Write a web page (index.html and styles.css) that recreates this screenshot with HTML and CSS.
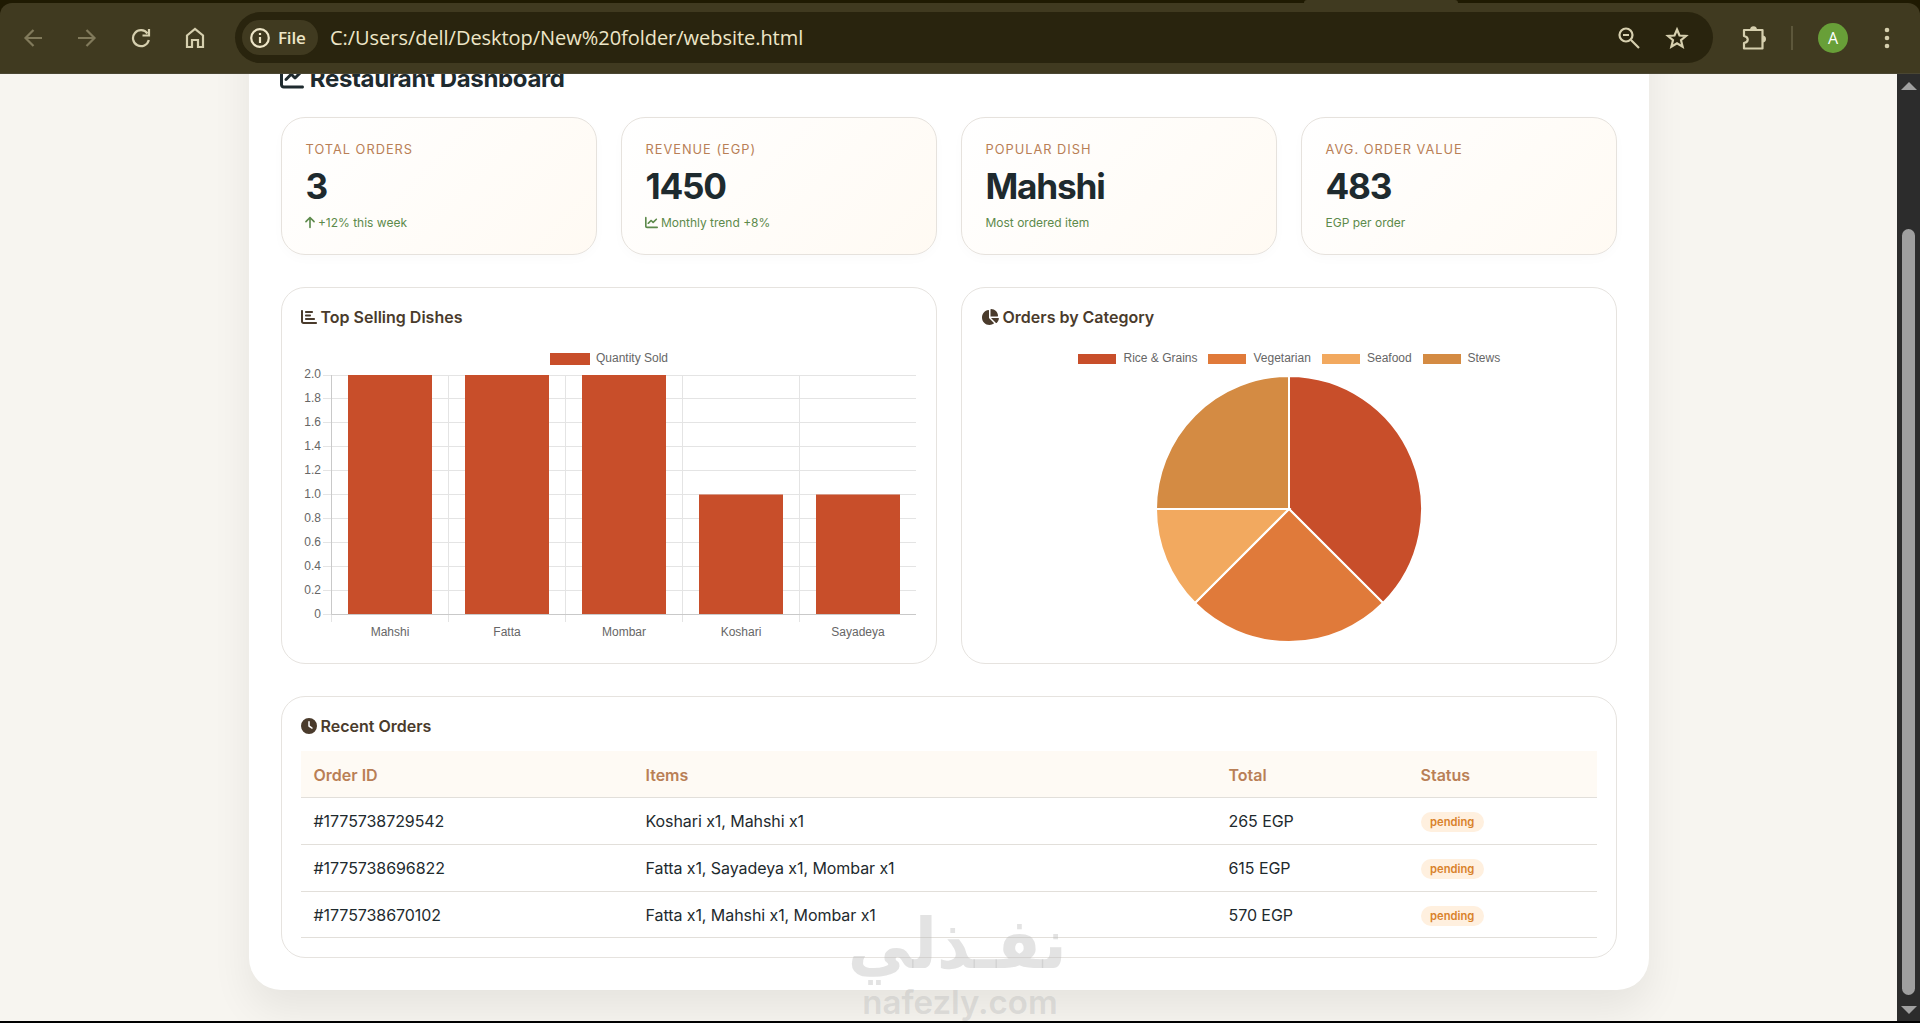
FILE: index.html
```html
<!DOCTYPE html>
<html lang="en">
<head>
  <meta charset="UTF-8">
  <title>Restaurant Dashboard</title>
  <link rel="stylesheet" href="styles.css">
</head>
<body>
  <div class="tab-strip"><div class="active-tab"></div></div>
  <header class="toolbar">
    <div class="nav-icons">
      <svg class="dim" width="20" height="20" viewBox="0 0 20 20"><path d="M19 10H3M10.500 2L2.500 10l8 8"/></svg>
      <svg class="dim" width="20" height="20" viewBox="0 0 20 20"><path d="M1 10h16M9.500 2l8 8-8 8"/></svg>
      <svg width="20" height="20" viewBox="0 0 20 20"><path d="M16.500 5.500A8 8 0 1 0 17.800 12M18 1v6.500h-6.500"/></svg>
      <svg width="20" height="22" viewBox="0 0 20 22"><path d="M2 8.500L10 2l8 6.500V20h-5v-7H7v7H2z"/></svg>
    </div>
    <div class="omnibox">
      <div class="chip">
        <svg width="20" height="20" viewBox="0 0 20 20"><circle cx="10" cy="10" r="8.800"/><path d="M10 9v6M10 5v2"/></svg>
        <span>File</span>
      </div>
      <span class="url">C:/Users/dell/Desktop/New%20folder/website.html</span>
      <svg class="zoom-icon" width="22" height="22" viewBox="0 0 22 22"><circle cx="8" cy="8" r="6.500"/><path d="M5 8h6M13 13l8 8"/></svg>
      <svg width="24" height="24" viewBox="0 0 24 24"><path d="M12 3.500l2.500 6 6.500.5-5 4.200 1.600 6.400L12 17.200l-5.600 3.400L8 14.200 3 10l6.500-.5z"/></svg>
    </div>
    <svg class="puzzle" width="26" height="26" viewBox="0 0 26 26"><path d="M3 5h18.500v18.500H3v-5.500c5-1 5-6 0-7z" stroke-linejoin="round"/><path class="solid" d="M9 5a3.500 3.800 0 0 1 7 0zM21.500 10.500a3.500 3.500 0 0 1 0 7z"/></svg>
    <div class="divider"></div>
    <div class="avatar">A</div>
    <svg class="dots" width="6" height="22" viewBox="0 0 6 22"><circle cx="3" cy="3" r="2.300"/><circle cx="3" cy="11" r="2.300"/><circle cx="3" cy="19" r="2.300"/></svg>
  </header>

  <div class="viewport">
    <div class="page">
      <main class="dashboard">
        <h2>
          <svg width="24" height="24" viewBox="0 0 512 512"><path d="M64 64c0-17.700-14.300-32-32-32S0 46.300 0 64V400c0 44.200 35.800 80 80 80H480c17.700 0 32-14.300 32-32s-14.300-32-32-32H80c-8.800 0-16-7.200-16-16V64zm406.600 86.600c12.500-12.500 12.500-32.800 0-45.300s-32.800-12.500-45.300 0L320 210.700l-57.400-57.400c-12.500-12.500-32.800-12.500-45.300 0l-112 112c-12.500 12.500-12.500 32.800 0 45.300s32.800 12.500 45.300 0L240 221.300l57.400 57.400c12.500 12.500 32.800 12.500 45.300 0l128-128z"/></svg>
          Restaurant Dashboard
        </h2>

        <div class="stats">
          <div class="stat-card">
            <div class="stat-label">Total Orders</div>
            <div class="stat-value">3</div>
            <div class="stat-note"><svg width="10" height="13" viewBox="0 0 384 512"><path d="M214.600 41.400c-12.500-12.500-32.800-12.500-45.300 0l-160 160c-12.500 12.500-12.500 32.800 0 45.300s32.800 12.500 45.300 0L160 141.200V448c0 17.700 14.300 32 32 32s32-14.300 32-32V141.200L329.400 246.600c12.500 12.500 32.800 12.500 45.300 0s12.500-32.800 0-45.300l-160-160z"/></svg> +12% this week</div>
          </div>
          <div class="stat-card">
            <div class="stat-label">Revenue (EGP)</div>
            <div class="stat-value">1450</div>
            <div class="stat-note"><svg width="13" height="13" viewBox="0 0 512 512"><path d="M64 64c0-17.700-14.300-32-32-32S0 46.300 0 64V400c0 44.200 35.800 80 80 80H480c17.700 0 32-14.300 32-32s-14.300-32-32-32H80c-8.800 0-16-7.200-16-16V64zm406.600 86.600c12.500-12.500 12.500-32.800 0-45.300s-32.800-12.500-45.300 0L320 210.700l-57.400-57.400c-12.500-12.500-32.800-12.500-45.300 0l-112 112c-12.500 12.500-12.500 32.800 0 45.300s32.800 12.500 45.300 0L240 221.300l57.400 57.400c12.500 12.500 32.800 12.500 45.300 0l128-128z"/></svg> Monthly trend +8%</div>
          </div>
          <div class="stat-card">
            <div class="stat-label">Popular Dish</div>
            <div class="stat-value">Mahshi</div>
            <div class="stat-note">Most ordered item</div>
          </div>
          <div class="stat-card">
            <div class="stat-label">Avg. Order Value</div>
            <div class="stat-value">483</div>
            <div class="stat-note">EGP per order</div>
          </div>
        </div>

        <div class="charts">
          <section class="panel chart-panel">
            <h3>
              <svg width="16" height="16" viewBox="0 0 512 512"><path d="M32 32c17.700 0 32 14.300 32 32V400c0 8.800 7.200 16 16 16H480c17.700 0 32 14.300 32 32s-14.300 32-32 32H80c-44.200 0-80-35.800-80-80V64C0 46.300 14.300 32 32 32zm96 64c0-17.700 14.300-32 32-32l192 0c17.700 0 32 14.300 32 32s-14.300 32-32 32l-192 0c-17.700 0-32-14.300-32-32zm32 80H288c17.700 0 32 14.300 32 32s-14.300 32-32 32H160c-17.700 0-32-14.300-32-32s14.300-32 32-32zm0 112H416c17.700 0 32 14.300 32 32s-14.300 32-32 32H160c-17.700 0-32-14.300-32-32s14.300-32 32-32z"/></svg>
              Top Selling Dishes
            </h3>
            <svg class="chart" width="616" height="300" viewBox="301 344 616 300">
              <rect x="550" y="353" width="40" height="12" fill="#c84e2a"/>
              <text x="596" y="362">Quantity Sold</text>
              <path class="grid" d="M323 375.500H916M323 398.500H916M323 422.500H916M323 446.500H916M323 470.500H916M323 494.500H916M323 518.500H916M323 542.500H916M323 566.500H916M323 590.500H916M323 614.500H331"/>
              <path class="grid" d="M331.500 614V622M448.500 375V622M565.500 375V622M682.500 375V622M799.500 375V622"/>
              <path class="axis" d="M331.500 375V614.500H916"/>
              <g fill="#c84e2a">
                <rect x="348" y="375" width="84" height="239"/>
                <rect x="465" y="375" width="84" height="239"/>
                <rect x="582" y="375" width="84" height="239"/>
                <rect x="699" y="494.500" width="84" height="119.500"/>
                <rect x="816" y="494.500" width="84" height="119.500"/>
              </g>
              <g text-anchor="end">
                <text x="321" y="378">2.0</text>
                <text x="321" y="402">1.8</text>
                <text x="321" y="426">1.6</text>
                <text x="321" y="450">1.4</text>
                <text x="321" y="474">1.2</text>
                <text x="321" y="498">1.0</text>
                <text x="321" y="522">0.8</text>
                <text x="321" y="546">0.6</text>
                <text x="321" y="570">0.4</text>
                <text x="321" y="594">0.2</text>
                <text x="321" y="618">0</text>
              </g>
              <g text-anchor="middle">
                <text x="390" y="636">Mahshi</text>
                <text x="507" y="636">Fatta</text>
                <text x="624" y="636">Mombar</text>
                <text x="741" y="636">Koshari</text>
                <text x="858" y="636">Sayadeya</text>
              </g>
            </svg>
          </section>

          <section class="panel chart-panel">
            <h3>
              <svg width="18" height="16" viewBox="0 0 576 512"><path d="M304 240V16.600c0-9 7-16.600 16-16.600C443.700 0 544 100.300 544 224c0 9-7.600 16-16.600 16H304zM32 272C32 150.700 122.100 50.300 239 34.300c9.200-1.300 17 6.100 17 15.400V288L412.500 444.500c6.700 6.700 6.200 17.700-1.500 23.100C371.800 495.600 323.800 512 272 512C139.500 512 32 404.600 32 272zm526.400 16c9.300 0 16.600 7.800 15.400 17c-7.700 55.900-34.600 105.600-73.900 142.300c-6 5.600-15.400 5.200-21.200-.7L320 288H558.400z"/></svg>
              Orders by Category
            </h3>
            <svg class="chart" width="616" height="300" viewBox="981 344 616 300">
              <rect x="1078" y="354" width="38" height="10" fill="#c84e2a"/>
              <text x="1123.500" y="362">Rice &amp; Grains</text>
              <rect x="1208" y="354" width="38" height="10" fill="#e07a3a"/>
              <text x="1253.500" y="362">Vegetarian</text>
              <rect x="1322" y="354" width="38" height="10" fill="#f2a95f"/>
              <text x="1367" y="362">Seafood</text>
              <rect x="1423" y="354" width="38" height="10" fill="#d48b43"/>
              <text x="1467.500" y="362">Stews</text>
              <g stroke="#fff" stroke-width="2">
                <path fill="#c84e2a" d="M1289 509V376A133 133 0 0 1 1383.050 603.050z"/>
                <path fill="#e07a3a" d="M1289 509L1383.050 603.050A133 133 0 0 1 1194.950 603.050z"/>
                <path fill="#f2a95f" d="M1289 509L1194.950 603.050A133 133 0 0 1 1156 509z"/>
                <path fill="#d48b43" d="M1289 509H1156A133 133 0 0 1 1289 376z"/>
              </g>
            </svg>
          </section>
        </div>

        <section class="panel orders">
          <h3>
            <svg width="16" height="16" viewBox="0 0 512 512"><path d="M256 0a256 256 0 1 1 0 512A256 256 0 1 1 256 0zM232 120V256c0 8 4 15.500 10.700 20l96 64c11 7.400 25.900 4.400 33.300-6.700s4.400-25.900-6.700-33.300L280 243.200V120c0-13.300-10.700-24-24-24s-24 10.700-24 24z"/></svg>
            Recent Orders
          </h3>
          <table>
            <thead>
              <tr><th class="col-id">Order ID</th><th class="col-items">Items</th><th class="col-total">Total</th><th>Status</th></tr>
            </thead>
            <tbody>
              <tr><td>#1775738729542</td><td>Koshari x1, Mahshi x1</td><td>265 EGP</td><td><span class="badge">pending</span></td></tr>
              <tr><td>#1775738696822</td><td>Fatta x1, Sayadeya x1, Mombar x1</td><td>615 EGP</td><td><span class="badge">pending</span></td></tr>
              <tr><td>#1775738670102</td><td>Fatta x1, Mahshi x1, Mombar x1</td><td>570 EGP</td><td><span class="badge">pending</span></td></tr>
            </tbody>
          </table>
        </section>
      </main>
    </div>
    <div class="scrollbar">
      <div class="arrow-up"></div>
      <div class="thumb"></div>
      <div class="arrow-down"></div>
    </div>
  </div>

  <div class="watermark">
    <div class="mark-ar" lang="ar" dir="rtl">نفـذلي</div>
    <div class="mark-en">nafezly.com</div>
  </div>
</body>
</html>
```
FILE: styles.css
```css
* {
  box-sizing: border-box;
}
body {
  margin: 0;
  width: 1920px;
  height: 1023px;
  overflow: hidden;
  background: #1f1a02;
  font-family: Inter, sans-serif;
  color: #1e2a2e;
}
h2, h3 {
  margin: 0;
}

/* browser bar */
.tab-strip {
  height: 3px;
  padding-left: 1304px;
}
.active-tab {
  width: 154px;
  height: 3px;
  background: #403a20;
  border-radius: 3px 3px 0 0;
}
.toolbar {
  display: flex;
  align-items: center;
  height: 71px;
  padding: 0 30px 1px 23px;
  background: #403a20;
  border-bottom: 1px solid #4a4632;
  border-radius: 12px 12px 0 0;
  font-family: "Open Sans", sans-serif;
}
.toolbar svg {
  fill: none;
  stroke: #d6cfae;
  stroke-width: 2.2;
  flex: none;
}
.nav-icons {
  display: flex;
  align-items: center;
  gap: 34px;
  width: 212px;
}
.toolbar .dim {
  stroke: #817a5b;
}
.omnibox {
  display: flex;
  align-items: center;
  width: 1478px;
  height: 51px;
  padding: 0 24px 0 7px;
  background: #29240e;
  border-radius: 26px;
}
.chip {
  display: flex;
  align-items: center;
  gap: 8px;
  width: 76px;
  height: 35px;
  padding-left: 8px;
  border-radius: 18px;
  background: #403a20;
  color: #eee6c8;
  font-size: 17px;
  font-weight: 600;
  letter-spacing: -0.2px;
}
.chip svg {
  stroke: #eee6c8;
}
.url {
  flex: 1;
  margin-left: 12px;
  color: #eee6c8;
  font-size: 20px;
  letter-spacing: -0.04px;
}
.zoom-icon {
  margin-right: 25px;
}
.puzzle {
  margin-left: 28px;
}
.toolbar .puzzle .solid {
  fill: #d6cfae;
  stroke: none;
}
.divider {
  width: 2px;
  height: 24px;
  margin: 0 25px 0 24px;
  background: #5d573b;
}
.avatar {
  width: 30px;
  height: 30px;
  margin-right: 36px;
  border-radius: 50%;
  background: #689f38;
  color: #fff;
  font-size: 16px;
  line-height: 30px;
  text-align: center;
}
.toolbar .dots {
  fill: #d6cfae;
  stroke: none;
}

/* page */
.viewport {
  display: flex;
  height: 949px;
  border-bottom: 2px solid #000;
}
.page {
  width: 1897px;
  height: 947px;
  overflow: hidden;
  background: #f7f5f0;
}
.dashboard {
  width: 1400px;
  height: 1016px;
  margin: -100px auto 0;
  padding: 88px 32px 0;
  background: #fff;
  border-radius: 32px;
  box-shadow: 0 20px 40px rgba(0, 0, 0, 0.07);
}
.dashboard svg {
  fill: currentColor;
}
h2 {
  height: 55px;
  font-size: 24px;
  line-height: 34px;
  letter-spacing: -0.35px;
}
h2 svg {
  margin-right: 1px;
  margin-left: -1px;
  vertical-align: -3px;
}
.stats {
  display: grid;
  grid-template-columns: repeat(4, 1fr);
  gap: 24px;
}
.stat-card {
  height: 138px;
  padding: 24px;
  border: 1px solid #e6e2dd;
  border-radius: 24px;
  background: linear-gradient(135deg, #fff 0%, #fffaf3 100%);
  box-shadow: 0 4px 12px rgba(0, 0, 0, 0.02);
}
.stat-label {
  color: #b97f56;
  font-size: 12.8px;
  line-height: 15px;
  letter-spacing: 1px;
  text-transform: uppercase;
}
.stat-value {
  margin: 8px 0;
  font-size: 35.2px;
  font-weight: 700;
  line-height: 42px;
  letter-spacing: -1.2px;
}
.stat-note {
  color: #5d8a4b;
  font-size: 12px;
  line-height: 15px;
}
.stat-note svg {
  margin-left: -1px;
  vertical-align: -2px;
}
.charts {
  display: grid;
  grid-template-columns: 1fr 1fr;
  gap: 24px;
  margin: 32px 0;
}
.panel {
  padding: 19px;
  border: 1px solid #e6e3df;
  border-radius: 24px;
}
.chart-panel {
  height: 377px;
}
h3 {
  height: 37px;
  color: #4a3b2c;
  font-size: 16px;
  font-weight: 600;
  line-height: 20px;
}
h3 svg {
  vertical-align: -2px;
}
.chart {
  display: block;
}
.chart text {
  fill: #666;
  font: 12px "Liberation Sans", Arial, sans-serif;
}
.chart .grid, .chart .axis {
  fill: none;
  stroke: #e4e4e4;
}
.chart .axis {
  stroke: #c9c9c9;
}

.orders {
  height: 262px;
}
.orders h3 {
  height: 35px;
}
table {
  width: 1296px;
  border-collapse: separate;
  border-spacing: 0;
  table-layout: fixed;
}
th, td {
  height: 47px;
  padding: 0 13px;
  border-bottom: 1px solid #e2dfda;
  text-align: left;
  font-size: 16px;
  letter-spacing: -0.07px;
}
th {
  padding-top: 2px;
  background: #fefaf4;
  color: #b97f56;
  font-weight: 600;
  letter-spacing: 0;
}
tr:last-child td {
  height: 46px;
}
.badge {
  display: inline-block;
  padding: 0 9.6px;
  margin-top: 2px;
  border-radius: 20px;
  background: #fff0df;
  color: #d9822b;
  font-size: 11.2px;
  font-weight: 600;
  line-height: 20px;
  letter-spacing: 0;
}
.col-id {
  width: 332px;
}
.col-items {
  width: 583px;
}
.col-total {
  width: 192px;
}

.scrollbar {
  display: flex;
  flex-direction: column;
  align-items: center;
  width: 23px;
  padding: 8px 0 7px;
  background: #2c2c2c;
}
.arrow-up, .arrow-down {
  border: 8px solid transparent;
}
.arrow-up {
  border-top: 0;
  border-bottom-color: #a0a0a0;
}
.arrow-down {
  border-bottom: 0;
  border-top-color: #a0a0a0;
}
.thumb {
  width: 13px;
  height: 766px;
  margin: 139px 0 11px;
  border-radius: 7px;
  background: #9f9f9f;
}

/* site mark over the page */
.watermark {
  position: absolute;
  left: 844px;
  top: 904px;
  width: 232px;
  color: rgba(185, 185, 185, 0.4);
  text-align: center;
  white-space: nowrap;
}
.mark-ar {
  height: 80px;
  font: bold 70px/80px "DejaVu Sans", sans-serif;
  transform: scaleX(0.92);
}
.mark-en {
  font: 600 33px/36px Inter, sans-serif;
}
```
